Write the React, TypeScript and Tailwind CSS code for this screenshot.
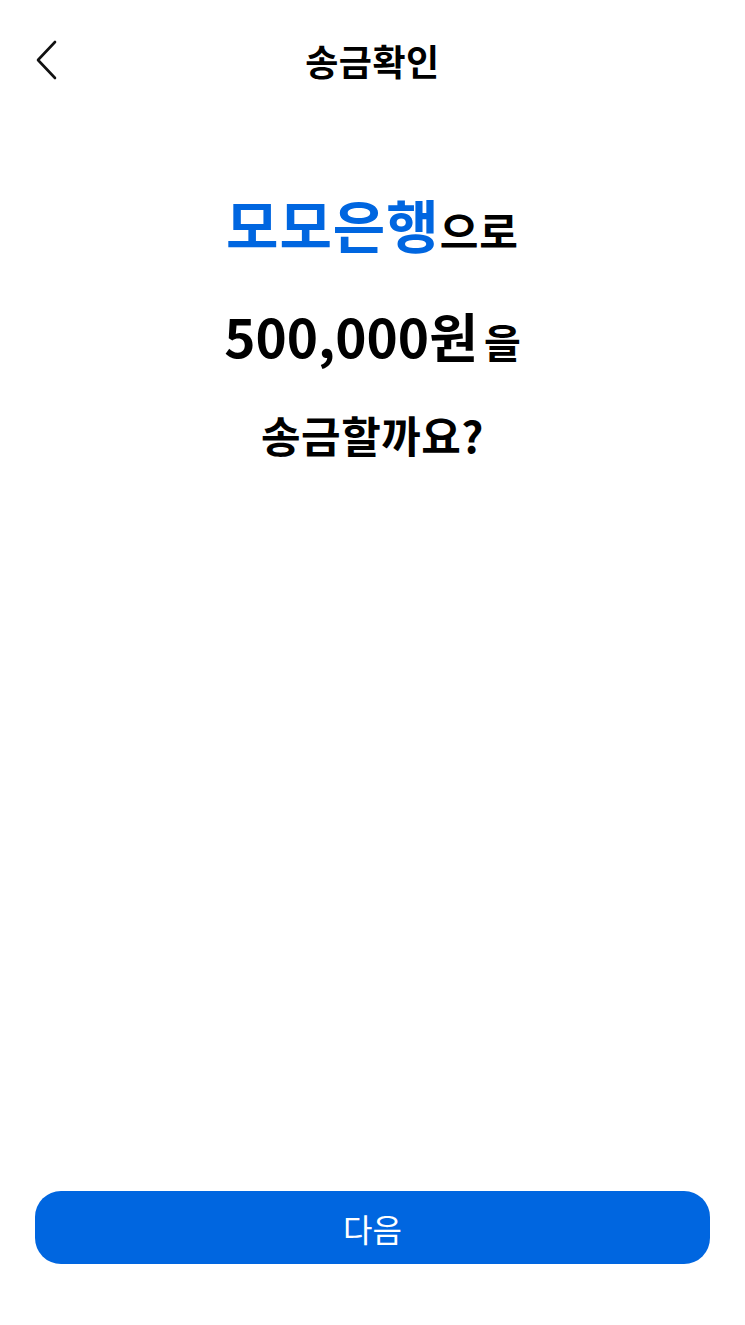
import React from 'react';

const App: React.FC = () => {
  return (
    <div
      className="flex min-h-[1325px] w-full flex-col bg-white text-black"
      style={{ fontFamily: '"Noto Sans CJK KR", "Noto Sans", sans-serif' }}
    >
      <header className="relative flex h-[132px] items-start justify-center pt-[34px]">
        <button className="absolute left-[31px] top-[35px] p-1">
          <svg width="22" height="42" viewBox="0 0 22 42" fill="none">
            <path d="M20 3 L3 21 L20 39" stroke="#111" strokeWidth="2.6" strokeLinecap="round" strokeLinejoin="round" />
          </svg>
        </button>
        <h1 className="text-[36px] font-bold leading-[52px] tracking-[0.5px]">송금확인</h1>
      </header>

      <div className="mt-[56px] flex flex-col items-center">
        <p className="font-bold leading-[70px]">
          <span className="text-[57px] tracking-[1px] text-[#0066e0]">모모은행</span>
          <span className="text-[42px] tracking-[1px]">으로</span>
        </p>
        <p className="mt-[24px] font-bold leading-[70px]">
          <span className="text-[53px]">500,000원</span>
          <span className="ml-[6px] text-[40px]">을</span>
        </p>
        <p className="mt-[18px] text-[43px] font-bold leading-[60px] tracking-[0.5px]">송금할까요?</p>
      </div>

      <div className="mt-auto px-[35px] pb-[61px]">
        <button className="h-[73px] w-full rounded-[26px] bg-[#0066e0] text-[32px] text-white">다음</button>
      </div>
    </div>
  );
};

export default App;
